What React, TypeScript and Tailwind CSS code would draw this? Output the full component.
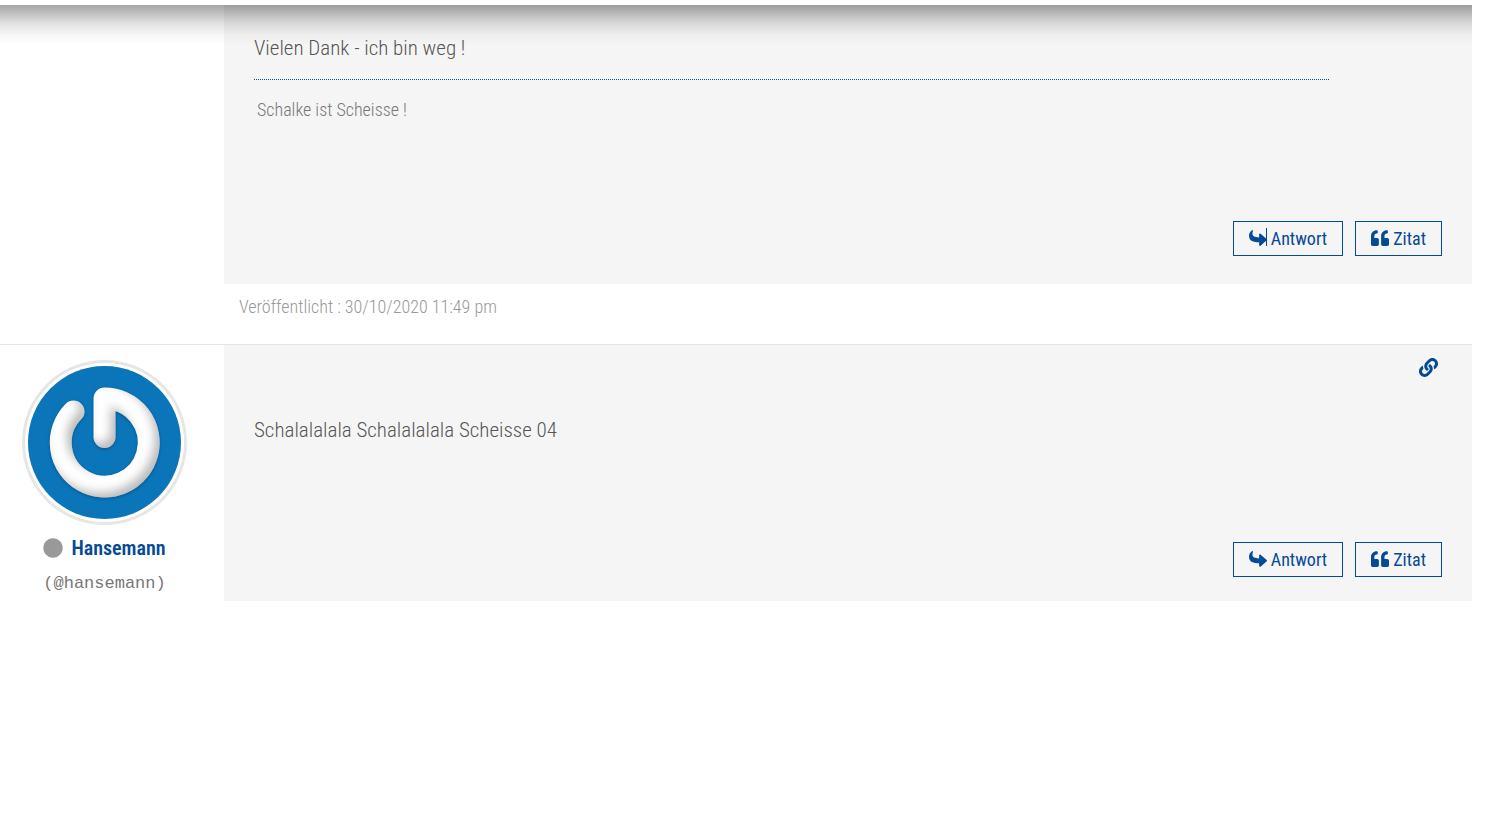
import type { ReactNode } from "react";
import { FaCircle, FaLink, FaQuoteLeft, FaReply } from "react-icons/fa";

function PostButton({ icon, label, children }: { icon: ReactNode; label: string; children?: ReactNode }) {
  return (
    <button
      type="button"
      className="relative flex h-[35px] items-center gap-1 border border-[#044a96] px-[15px] text-[18px] leading-6 text-[#044a96] cursor-pointer"
    >
      {icon}
      <span>{label}</span>
      {children}
    </button>
  );
}

function PostActions({ caret = false }: { caret?: boolean }) {
  return (
    <div className="flex justify-end gap-3">
      <PostButton icon={<FaReply className="mb-0.5 size-[18px] rotate-180" />} label="Antwort">
        {caret && <span className="absolute left-8 top-[6px] h-[18px] w-px bg-[#044a96]" />}
      </PostButton>
      <PostButton icon={<FaQuoteLeft className="mb-0.5 size-[18px]" />} label="Zitat" />
    </div>
  );
}

function Avatar() {
  return (
    <svg viewBox="0 0 165 165" className="size-[165px]" role="img" aria-label="Hansemann">
      <defs>
        <filter id="bevel" filterUnits="userSpaceOnUse" x="0" y="0" width="165" height="165" colorInterpolationFilters="sRGB">
          <feGaussianBlur in="SourceAlpha" stdDeviation="5" result="soft" />
          <feOffset in="soft" dx="-5" dy="-5" result="moved" />
          <feComposite in="SourceAlpha" in2="moved" operator="out" result="edge" />
          <feFlood floodColor="#777" floodOpacity="0.5" />
          <feComposite in2="edge" operator="in" result="shade" />
          <feDropShadow in="SourceGraphic" dx="0" dy="1" stdDeviation="1.5" floodColor="#023e68" floodOpacity="0.6" result="base" />
          <feMerge>
            <feMergeNode in="base" />
            <feMergeNode in="shade" />
          </feMerge>
        </filter>
      </defs>
      <circle cx="82.5" cy="82.5" r="81" fill="#fff" stroke="#e6e6e6" strokeWidth="3" />
      <circle cx="82.5" cy="82.5" r="76.5" fill="#0a75b9" />
      <path
        d="M51.5 51.5 A44 44 0 1 0 82.5 38.5 V77"
        fill="none"
        stroke="#fff"
        strokeWidth="22"
        strokeLinecap="round"
        strokeLinejoin="round"
        filter="url(#bevel)"
      />
    </svg>
  );
}

export default function App() {
  return (
    <main className="relative mr-[35px] mt-[5px] bg-white font-['Roboto_Condensed','Roboto',sans-serif] font-light">
      {/* Shadow below the fixed header */}
      <div className="pointer-events-none absolute inset-x-0 top-0 h-10 bg-[linear-gradient(to_bottom,rgba(0,0,0,0.36)_0%,rgba(0,0,0,0.25)_20%,rgba(0,0,0,0.12)_45%,rgba(0,0,0,0.03)_75%,transparent_100%)]" />

      <article className="pl-56">
        <div className="bg-[#f5f5f5] px-[30px] pb-7 pt-7">
          <p className="text-[21px] leading-[30px] text-[#555]">Vielen Dank - ich bin weg !</p>
          <div className="mr-[113px] mt-4 border-t border-dotted border-[#044a96] px-[3px] pt-[17px]">
            <p className="text-[18px] leading-[26px] text-[#777]">Schalke ist Scheisse !</p>
          </div>
          <div className="mt-[98px] font-normal">
            <PostActions caret />
          </div>
        </div>
        <p className="px-[15px] pb-6 pt-[10px] text-[18px] leading-[26px] text-[#999]">
          Veröffentlicht : 30/10/2020 11:49 pm
        </p>
      </article>

      <article className="flex border-t border-[#e5e5e5]">
        <div className="flex w-56 shrink-0 flex-col items-center pr-[15px] pt-[15px]">
          <Avatar />
          <div className="mt-[9px] flex items-center gap-2 text-[20px] leading-7">
            <FaCircle className="size-5 text-[#999]" />
            <a href="#hansemann" className="font-semibold text-[#044a96]">Hansemann</a>
          </div>
          <p className="mt-[10px] font-['Liberation_Mono',monospace] text-[17px] font-normal leading-6 text-[#777]">
            (@hansemann)
          </p>
        </div>
        <div className="grow bg-[#f5f5f5] px-[30px] pb-6 pt-[13px]">
          <div className="flex justify-end pr-1">
            <a href="#post" aria-label="Link" className="text-[#044a96]">
              <FaLink className="size-[19px]" />
            </a>
          </div>
          <p className="mt-[38px] text-[21px] leading-[30px] text-[#555]">Schalalalala Schalalalala Scheisse 04</p>
          <div className="mt-[97px] font-normal">
            <PostActions />
          </div>
        </div>
      </article>
    </main>
  );
}
